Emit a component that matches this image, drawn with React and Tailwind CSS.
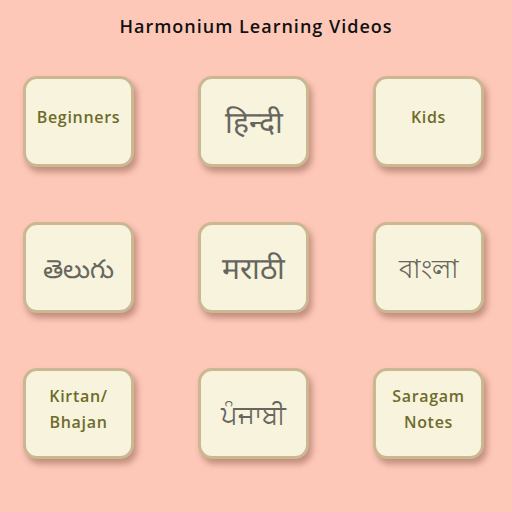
const items = [
  { label: 'Beginners', kind: 'en' },
  { label: 'हिन्दी', kind: 'dev' },
  { label: 'Kids', kind: 'en' },
  { label: 'తెలుగు', kind: 'in' },
  { label: 'मराठी', kind: 'dev' },
  { label: 'বাংলা', kind: 'in' },
  { label: 'Kirtan/ Bhajan', kind: 'en' },
  { label: 'ਪੰਜਾਬੀ', kind: 'in' },
  { label: 'Saragam Notes', kind: 'en' },
]

function Card({ label, kind }) {
  return (
    <div className="w-[111px] h-[91px] rounded-[14px] border-[3px] border-[#cbb892] bg-[#f8f3dc] shadow-[3px_5px_6px_rgba(120,70,50,0.45)] flex items-center justify-center text-center px-2">
      {kind === 'en' ? (
        <span className="-mt-[10px] text-[16px] leading-[26px] font-semibold text-[#6e6b2c] tracking-[0.7px]">{label}</span>
      ) : kind === 'dev' ? (
        <span className="text-[30px] leading-[36px] font-light text-[#66665f]">{label}</span>
      ) : (
        <span className="text-[26px] leading-[32px] font-light text-[#66665f]">{label}</span>
      )}
    </div>
  )
}

export default function App() {
  return (
    <div className="w-[512px] h-[512px] bg-[#fec8b9] font-['Open_Sans','Lato',sans-serif]">
      <h1 className="pt-[13px] text-center text-[18px] leading-[26px] font-semibold text-[#111] tracking-[1px]">
        Harmonium Learning Videos
      </h1>
      <div className="mt-[37px] pl-[23px] pr-[28px] grid grid-cols-[111px_111px_111px] justify-between gap-y-[55px]">
        {items.map((it) => (
          <Card key={it.label} {...it} />
        ))}
      </div>
    </div>
  )
}
